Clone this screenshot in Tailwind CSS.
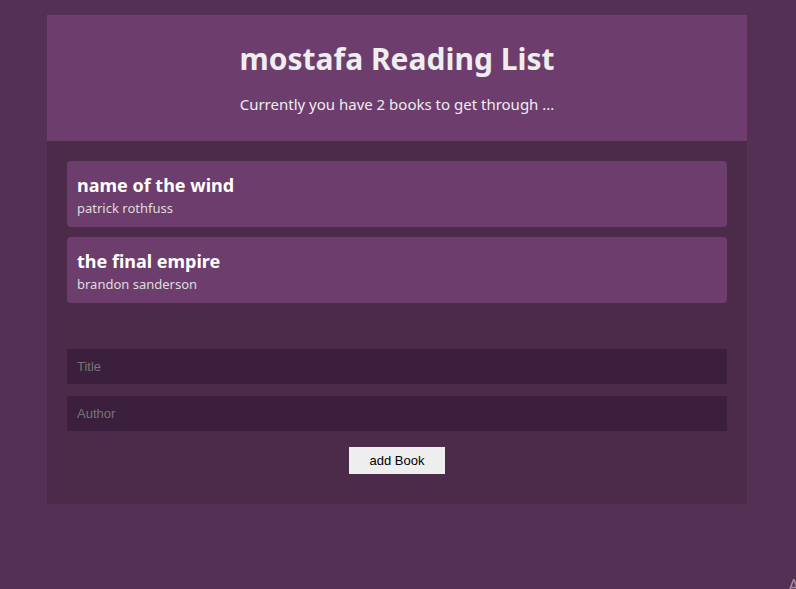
<!DOCTYPE html>
<html lang="en">
<head>
<meta charset="utf-8">
<meta name="viewport" content="width=device-width, initial-scale=1">
<title>Reading List</title>
<script src="https://cdn.jsdelivr.net/npm/@tailwindcss/browser@4"></script>
</head>
<body class="min-h-screen overflow-hidden bg-[#553055] pt-[15px] pr-[18px] pl-4 font-['Segoe_UI','Noto_Sans',sans-serif] text-[#eee]">
  <main class="mx-auto max-w-[700px] bg-[#4c2b4a]">
    <header class="bg-[#6d3d6d] px-5 pt-5 pb-6 text-center">
      <h1 class="text-[30px] leading-12 font-bold">mostafa Reading List</h1>
      <p class="mt-2 text-[15px] leading-[26px]">Currently you have 2 books to get through ...</p>
    </header>
    <ul class="flex flex-col gap-[10px] p-5">
      <li class="rounded bg-[#6d3d6d] p-[10px]">
        <h2 class="text-[18px] leading-7 font-bold text-white">name of the wind</h2>
        <p class="text-[13px] leading-[18px] text-[#ddd]">patrick rothfuss</p>
      </li>
      <li class="rounded bg-[#6d3d6d] p-[10px]">
        <h2 class="text-[18px] leading-7 font-bold text-white">the final empire</h2>
        <p class="text-[13px] leading-[18px] text-[#ddd]">brandon sanderson</p>
      </li>
    </ul>
    <form class="flex flex-col gap-3 px-5 pt-[26px] pb-[30px] font-['Liberation_Sans',sans-serif] text-[13px]">
      <input type="text" aria-label="Title" placeholder="Title" class="h-[35px] w-full bg-[#3c1f3c] px-[10px] text-[#eee] outline-none placeholder:text-[#757575]">
      <input type="text" aria-label="Author" placeholder="Author" class="h-[35px] w-full bg-[#3c1f3c] px-[10px] text-[#eee] outline-none placeholder:text-[#757575]">
      <button type="button" class="mt-1 min-w-24 cursor-pointer self-center bg-[#eee] px-5 py-[6px] leading-[15px] text-black">add Book</button>
    </form>
  </main>
  <div class="fixed top-[575px] left-[788px] font-['Segoe_UI','Noto_Sans',sans-serif] text-[18px] leading-5 whitespace-nowrap text-[#a08fa0]" aria-hidden="true">A</div>
</body>
</html>
